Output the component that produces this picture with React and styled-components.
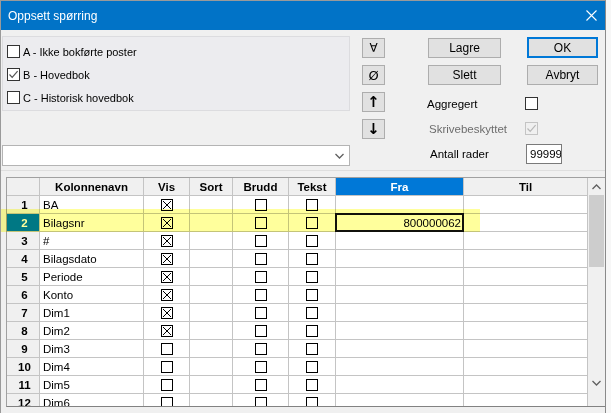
import React from "react";
import styled, { createGlobalStyle } from "styled-components";

const GlobalStyle = createGlobalStyle`
  html, body {
    margin: 0;
    padding: 0;
    background: #f7f7f7;
  }
  body {
    width: 611px;
    height: 413px;
    overflow: hidden;
    font-family: "Liberation Sans", Arial, sans-serif;
    color: #000;
  }
`;

const Window = styled.div`
  position: relative;
  width: 606px;
  height: 413px;
  box-sizing: border-box;
  background: #f0f0f0;
  border-left: 1px solid #9a9a9a;
  border-right: 1px solid #8a8a8a;
  border-top: 1px solid #9a9a9a;
  display: flex;
  flex-direction: column;
  overflow: hidden;
`;

const TitleBar = styled.div`
  height: 29px;
  flex: none;
  background: #0173c7;
  color: #fff;
  display: flex;
  align-items: center;
  justify-content: space-between;
  padding: 0 8px 0 7px;
  font-size: 12px;
`;

const CloseIcon = () => (
  <svg width="11" height="11" viewBox="0 0 11 11">
    <path d="M0.5 0.5L10.5 10.5M10.5 0.5L0.5 10.5" stroke="#fff" strokeWidth="1.1" />
  </svg>
);

const TopArea = styled.div`
  height: 140px;
  flex: none;
  display: flex;
  padding: 6px 0 0 1px;
  box-sizing: border-box;
  font-size: 11px;
`;

const LeftCol = styled.div`
  width: 348px;
  display: flex;
  flex-direction: column;
`;

const GroupPanel = styled.div`
  height: 75px;
  box-sizing: border-box;
  border: 1px solid #dcdcdf;
  background: #ececef;
  padding: 3px 0 0 4px;
`;

const CheckRow = styled.label`
  display: flex;
  align-items: center;
  gap: 3px;
  height: 23px;
`;

const Box = styled.span`
  width: 13px;
  height: 13px;
  box-sizing: border-box;
  border: 1px solid ${p => (p.disabled ? "#c4c4c4" : "#333")};
  background: ${p => (p.disabled ? "#f0f0f0" : "#fff")};
  display: inline-flex;
  align-items: center;
  justify-content: center;
  flex: none;
`;

const Tick = ({ color }) => (
  <svg width="11" height="11" viewBox="0 0 11 11">
    <path d="M1.5 5.5L4.2 8.3L9.6 2.2" fill="none" stroke={color} strokeWidth="1.2" />
  </svg>
);

const CheckBox = ({ checked, disabled }) => (
  <Box disabled={disabled}>{checked && <Tick color={disabled ? "#b8b8b8" : "#555"} />}</Box>
);

const Combo = styled.div`
  margin-top: 34px;
  height: 21px;
  box-sizing: border-box;
  border: 1px solid #b4b4b4;
  background: #fff;
  display: flex;
  align-items: center;
  justify-content: flex-end;
  padding-right: 5px;
`;

const Chevron = ({ up }) => (
  <svg width="9" height="6" viewBox="0 0 9 6">
    <path
      d={up ? "M0.5 5L4.5 1L8.5 5" : "M0.5 1L4.5 5L8.5 1"}
      fill="none"
      stroke="#606060"
      strokeWidth="1.3"
    />
  </svg>
);

const SmallCol = styled.div`
  margin-left: 12px;
  padding-top: 2px;
  display: flex;
  flex-direction: column;
  gap: 7px;
`;

const SmallButton = styled.button`
  width: 23px;
  height: 20px;
  padding: 0;
  border: 1px solid #adadad;
  background: #e1e1e1;
  font-family: "DejaVu Sans", sans-serif;
  font-weight: ${p => (p.bold ? "bold" : "normal")};
  font-size: ${p => p.size || "13px"};
  color: #000;
  display: flex;
  align-items: center;
  justify-content: center;
`;

const RightCol = styled.div`
  margin-left: 43px;
  padding-top: 2px;
  display: grid;
  grid-template-columns: 97px 73px;
  grid-template-rows: 20px 27px 25px 25px 29px;
  align-items: end;
`;

const PushButton = styled.button`
  width: ${p => p.w || "73px"};
  height: ${p => (p.primary ? "21px" : "20px")};
  margin-left: ${p => p.ml || "0"};
  box-sizing: border-box;
  padding: 0;
  font-family: "Liberation Sans", Arial, sans-serif;
  font-size: 12px;
  color: #000;
  background: #e1e1e1;
  border: 1px solid ${p => (p.primary ? "#0078d7" : "#adadad")};
  box-shadow: ${p => (p.primary ? "inset 0 0 0 1px #0078d7" : "none")};
`;

const FieldLabel = styled.div`
  height: ${p => p.h};
  display: flex;
  align-items: center;
  padding-left: ${p => p.pl || "0"};
  margin-left: -1px;
  font-size: 11.5px;
  color: ${p => (p.disabled ? "#6d6d6d" : "#000")};
`;

const NumberInput = styled.div`
  width: 36px;
  height: 20px;
  margin-left: 1px;
  box-sizing: border-box;
  border: 1px solid #7a7a7a;
  background: #fff;
  overflow: hidden;
  white-space: nowrap;
  padding-left: 3px;
  line-height: 18px;
  font-size: 11.5px;
`;

const GridPanel = styled.div`
  flex: 1;
  border-top: 1px solid #dedede;
  padding: 6px 0 0 5px;
  font-size: 11.5px;
`;

const Grid = styled.div`
  width: 599px;
  height: 230px;
  box-sizing: border-box;
  border-top: 1px solid #a0a0a0;
  border-left: 1px solid #a0a0a0;
  border-bottom: 1px solid #828282;
  display: flex;
  background: #fff;
`;

const Table = styled.div`
  width: 581px;
  overflow: hidden;
`;

const Row = styled.div`
  display: grid;
  grid-template-columns: 33px 104px 46px 43px 56px 47px 128px 124px;
  height: 18px;
`;

const Cell = styled.div`
  box-sizing: border-box;
  border-right: 1px solid #c4c4c4;
  border-bottom: 1px solid #c4c4c4;
  display: flex;
  align-items: center;
  justify-content: ${p => p.align || "flex-start"};
  padding: ${p => p.pad || "0 0 0 3px"};
  white-space: nowrap;
  overflow: hidden;
`;

const HeadCell = styled(Cell)`
  background: ${p => (p.active ? "#0078d7" : "#f0f0f0")};
  color: ${p => (p.active ? "#fff" : "#000")};
  font-weight: bold;
  justify-content: center;
  padding: 0;
`;

const RowNum = styled(Cell)`
  background: ${p => (p.selected ? "#0078d7" : "#f0f0f0")};
  color: ${p => (p.selected ? "#fff" : "#000")};
  font-weight: bold;
  justify-content: center;
  padding: 0 0 0 3px;
`;

const EditCell = styled(Cell)`
  border: 2px solid #111;
  justify-content: flex-end;
  padding: 0 1px 0 0;
  margin: -1px 0 0 -1px;
  height: 19px;
  width: 129px;
`;

const Scrollbar = styled.div`
  width: 17px;
  background: #f0f0f0;
  display: flex;
  flex-direction: column;
  align-items: center;
`;

const ArrowSlot = styled.div`
  height: 17px;
  width: 17px;
  flex: none;
  display: flex;
  align-items: center;
  justify-content: center;
`;

const Thumb = styled.div`
  width: 15px;
  height: 72px;
  background: #cdcdcd;
`;

const Spacer = styled.div`
  flex: ${p => p.fixed ? `0 0 ${p.fixed}` : "1"};
`;

const Highlight = styled.div`
  position: absolute;
  left: -1px;
  top: 208px;
  width: 480px;
  height: 23px;
  background: #ffff9c;
  mix-blend-mode: multiply;
  pointer-events: none;
`;

const XBox = ({ checked }) => (
  <svg width="12" height="12" viewBox="0 0 12 12">
    <rect x="0.5" y="0.5" width="11" height="11" fill="#fff" stroke="#000" />
    {checked && <path d="M2 2L10 10M10 2L2 10" stroke="#000" strokeWidth="1" />}
  </svg>
);

const rows = [
  { name: "BA", vis: true },
  { name: "Bilagsnr", vis: true, fra: "800000062", selected: true },
  { name: "#", vis: true },
  { name: "Bilagsdato", vis: true },
  { name: "Periode", vis: true },
  { name: "Konto", vis: true },
  { name: "Dim1", vis: true },
  { name: "Dim2", vis: true },
  { name: "Dim3", vis: false },
  { name: "Dim4", vis: false },
  { name: "Dim5", vis: false },
  { name: "Dim6", vis: false },
];

export default function App() {
  return (
    <>
      <GlobalStyle />
      <Window>
        <TitleBar>
          <span>Oppsett spørring</span>
          <CloseIcon />
        </TitleBar>

        <TopArea>
          <LeftCol>
            <GroupPanel>
              <CheckRow>
                <CheckBox />
                A - Ikke bokførte poster
              </CheckRow>
              <CheckRow>
                <CheckBox checked />
                B - Hovedbok
              </CheckRow>
              <CheckRow>
                <CheckBox />
                C - Historisk hovedbok
              </CheckRow>
            </GroupPanel>
            <Combo>
              <Chevron />
            </Combo>
          </LeftCol>

          <SmallCol>
            <SmallButton size="12px">∀</SmallButton>
            <SmallButton size="13px">Ø</SmallButton>
            <SmallButton bold size="15px">↑</SmallButton>
            <SmallButton bold size="15px">↓</SmallButton>
          </SmallCol>

          <RightCol>
            <PushButton>Lagre</PushButton>
            <PushButton primary w="71px" ml="2px">OK</PushButton>
            <PushButton>Slett</PushButton>
            <PushButton w="71px" ml="2px">Avbryt</PushButton>
            <FieldLabel h="13px">Aggregert</FieldLabel>
            <CheckBox />
            <FieldLabel h="13px" pl="2px" disabled>Skrivebeskyttet</FieldLabel>
            <CheckBox checked disabled />
            <FieldLabel h="20px" pl="3px">Antall rader</FieldLabel>
            <NumberInput>99999</NumberInput>
          </RightCol>
        </TopArea>

        <GridPanel>
          <Grid>
            <Table>
              <Row>
                <HeadCell />
                <HeadCell>Kolonnenavn</HeadCell>
                <HeadCell>Vis</HeadCell>
                <HeadCell>Sort</HeadCell>
                <HeadCell>Brudd</HeadCell>
                <HeadCell>Tekst</HeadCell>
                <HeadCell active>Fra</HeadCell>
                <HeadCell>Til</HeadCell>
              </Row>
              {rows.map((r, i) => (
                <Row key={r.name}>
                  <RowNum selected={r.selected}>{i + 1}</RowNum>
                  <Cell>{r.name}</Cell>
                  <Cell align="center" pad="0">
                    <XBox checked={r.vis} />
                  </Cell>
                  <Cell />
                  <Cell align="center" pad="0">
                    <XBox />
                  </Cell>
                  <Cell align="center" pad="0">
                    <XBox />
                  </Cell>
                  {r.fra ? <EditCell>{r.fra}</EditCell> : <Cell />}
                  <Cell />
                </Row>
              ))}
            </Table>
            <Scrollbar>
              <ArrowSlot>
                <Chevron up />
              </ArrowSlot>
              <Thumb />
              <Spacer />
              <ArrowSlot>
                <Chevron />
              </ArrowSlot>
              <Spacer fixed="15px" />
            </Scrollbar>
          </Grid>
        </GridPanel>

        <Highlight />
      </Window>
    </>
  );
}
